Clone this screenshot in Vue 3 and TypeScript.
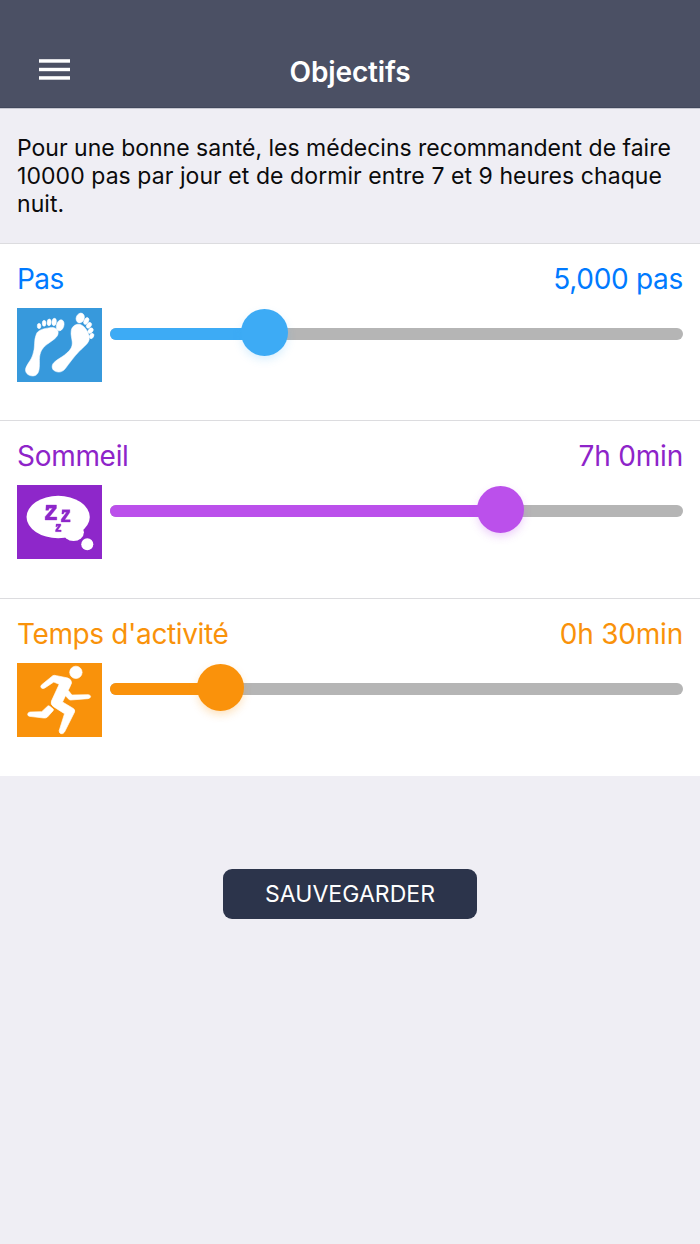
<script setup lang="ts">
interface Goal {
  id: 'steps' | 'sleep' | 'activity'
  label: string
  value: string
  labelSpacing: string
  valueSpacing: string
  position: number
}

const goals: Goal[] = [
  { id: 'steps', label: 'Pas', value: '5,000 pas', labelSpacing: '-0.6px', valueSpacing: '-0.3px', position: 154 },
  { id: 'sleep', label: 'Sommeil', value: '7h 0min', labelSpacing: '-0.3px', valueSpacing: '-0.2px', position: 390.5 },
  { id: 'activity', label: "Temps d'activité", value: '0h 30min', labelSpacing: '-0.38px', valueSpacing: '-0.2px', position: 110 },
]
</script>

<template>
  <main class="screen">
    <header class="bar">
      <button class="menu" aria-label="Menu">
        <svg width="31" height="21" viewBox="0 0 31 21" fill="#fff">
          <rect y="0.2" width="31" height="3.5" />
          <rect y="8.8" width="31" height="3.4" />
          <rect y="17.2" width="31" height="3.5" />
        </svg>
      </button>
      <h1>Objectifs</h1>
    </header>
    <p class="intro">
      <span>Pour une bonne santé, les médecins recommandent de faire</span><br />
      <span class="wide">10000 pas par jour et de dormir entre 7 et 9 heures chaque</span><br />
      <span class="wide">nuit.</span>
    </p>
    <section v-for="g in goals" :key="g.id" class="goal" :class="g.id">
      <div class="heading">
        <span :style="{ letterSpacing: g.labelSpacing }">{{ g.label }}</span>
        <span :style="{ letterSpacing: g.valueSpacing }">{{ g.value }}</span>
      </div>
      <div class="control">
        <svg v-if="g.id === 'steps'" class="icon" viewBox="21 23 254 222" preserveAspectRatio="none">
          <g fill="#fff" stroke="#fff" stroke-width="1.6">
            <path d="M79 101C84 88 101 85 119 82C134 79 145 87 144 98C143 112 127 120 111 132C94 145 89 157 88 177C88 197 91 226 69 227C52 227 44 215 47 204C51 191 63 180 68 164C77 140 70 120 79 101Z" />
            <ellipse cx="87" cy="77" rx="5.5" ry="8" />
            <ellipse cx="102" cy="69" rx="5.5" ry="9" />
            <ellipse cx="117" cy="66" rx="6" ry="10" transform="rotate(5 117 66)" />
            <ellipse cx="132" cy="65" rx="6.5" ry="11" transform="rotate(8 132 65)" />
            <ellipse cx="150" cy="75" rx="11" ry="17" transform="rotate(17 150 75)" />
            <path d="M183 91C185 77 199 68 212 73C226 80 237 98 237 112C238 128 223 136 207 153C189 172 178 188 166 204C157 216 145 218 134 212C124 207 124 194 131 187C140 178 151 173 163 164C180 150 187 142 186 125C185 113 181 103 183 91Z" />
            <ellipse cx="210" cy="53" rx="12" ry="15" transform="rotate(22 210 53)" />
            <ellipse cx="228" cy="62" rx="6.5" ry="11" transform="rotate(28 228 62)" />
            <ellipse cx="236" cy="75" rx="6.5" ry="9.5" transform="rotate(36 236 75)" />
            <ellipse cx="241" cy="91" rx="6.5" ry="9" transform="rotate(40 241 91)" />
            <ellipse cx="244" cy="107" rx="6" ry="8.5" transform="rotate(28 244 107)" />
          </g>
        </svg>
        <svg v-else-if="g.id === 'sleep'" class="icon" viewBox="21 21 254 222" preserveAspectRatio="none">
          <g fill="#fff">
            <ellipse cx="144" cy="117" rx="94.5" ry="63.5" />
            <ellipse cx="190" cy="163" rx="31" ry="26" />
            <circle cx="231" cy="199" r="18" />
          </g>
          <g fill="#8e27ca" stroke="#8e27ca">
            <path d="M108 81H139V91L118 117H140V126H105V116L127 91H117L115 97H107Z" />
            <path d="M156 95H179V103L164 125H180V132H153V124L169 103H162L160 108H155Z" />
            <path d="M138 138H152V143L143 156H153V161H136V156L145 143H142L141 146H137Z" />
          </g>
        </svg>
        <svg v-else class="icon" viewBox="21 22 254 222" preserveAspectRatio="none">
          <g fill="#fff" stroke="#fff" stroke-width="2">
            <circle cx="197" cy="50" r="18.5" />
            <path d="M128 60Q132 58 139 60L173 67Q184 71 184 82Q180 93 174 104L185 118L234 117Q241 118 241 123Q240 128 233 129L181 133Q176 132 174 129L166 120L157 139L187 157Q196 162 193 169L163 229Q159 236 152 234Q147 232 147 225L163 174L130 153Q120 146 124 136L147 86L131 79L104 97Q98 100 94 97Q90 93 94 88Z" />
            <path d="M113 151Q116 149 119 152L129 160Q131 162 129 165L112 184Q108 188 101 187L58 182Q52 180 53 175Q54 170 60 169L95 168Z" />
          </g>
        </svg>
        <div class="slider" role="slider" :aria-label="g.label" :aria-valuetext="g.value">
          <div class="fill" :style="{ width: g.position + 'px' }" />
          <div class="thumb" :style="{ left: g.position + 'px' }" />
        </div>
      </div>
    </section>
    <div class="actions"><button class="save">SAUVEGARDER</button></div>
  </main>
</template>

<style>
body { background: #efeef4; }
</style>

<style scoped>
.screen {
  box-sizing: border-box;
  width: 700px;
  height: 1244px;
  overflow: hidden;
  background: #efeef4;
  font-family: Inter, "Liberation Sans", sans-serif;
}
button { padding: 0; border: 0; font: inherit; }
.bar {
  box-sizing: border-box;
  height: 108px;
  display: grid;
  grid-template-columns: 110px 1fr 110px;
  align-items: start;
  background: #4b5064;
  border-bottom: 1px solid #41475b;
  box-shadow: 0 1px 0 #c6c7d0;
}
.menu {
  width: 31px;
  margin: 59px 0 0 39px;
  background: none;
}
.menu svg { display: block; }
h1 {
  margin: 54px 0 0;
  text-align: center;
  color: #fff;
  font-size: 28px;
  font-weight: 600;
  line-height: 36px;
  letter-spacing: -0.15px;
}
.intro {
  box-sizing: border-box;
  height: 135px;
  margin: 0;
  padding: 26px 0 0 17px;
  white-space: nowrap;
  color: #0b0b0c;
  font-size: 23px;
  line-height: 28.2px;
}
.wide { letter-spacing: 0.065px; }
.goal {
  box-sizing: border-box;
  height: 178px;
  padding: 17px 17px 0;
  border-top: 1px solid #dcdcdf;
  background: #fff;
}
.goal.steps { height: 177px; }
.heading {
  display: flex;
  justify-content: space-between;
  height: 47px;
  font-size: 28px;
  line-height: 36px;
}
.control { display: flex; gap: 8px; }
.icon { display: block; width: 85px; height: 74px; }
.slider {
  position: relative;
  width: 573px;
  height: 12px;
  margin-top: 20px;
  border-radius: 6px;
  background: #b5b5b5;
}
.fill { height: 12px; border-radius: 6px 0 0 6px; background: var(--tone); }
.thumb {
  position: absolute;
  top: -19px;
  width: 47px;
  height: 47px;
  margin-left: -23.5px;
  border-radius: 50%;
  background: var(--tone);
  box-shadow: 0 4px 10px -1px var(--glow);
}
.steps { color: #007aff; --tone: #3dabf5; --glow: rgba(61, 171, 245, .22); }
.sleep { color: #8e24c9; --tone: #bb50eb; --glow: rgba(187, 80, 235, .3); }
.activity { color: #f9920a; --tone: #fa920b; --glow: rgba(250, 146, 11, .3); }
.steps .icon { background: #3799dc; }
.sleep .icon { background: #8e27ca; }
.activity .icon { background: #f9920b; }
.actions { display: flex; justify-content: center; padding-top: 93px; }
.save {
  width: 254px;
  height: 50px;
  border-radius: 9px;
  background: #2c344b;
  color: #fff;
  font-size: 23px;
  line-height: 51px;
  letter-spacing: 0.05px;
}
</style>
